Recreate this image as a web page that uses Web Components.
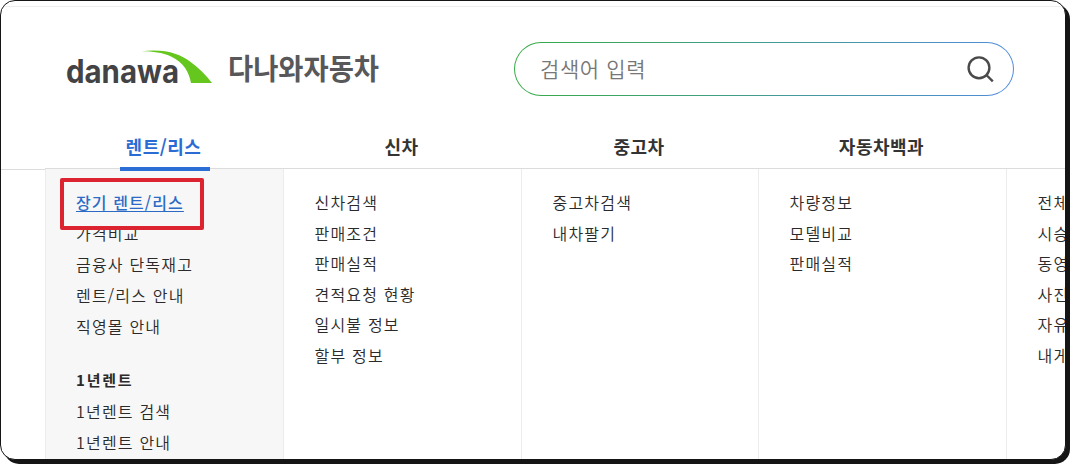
<!DOCTYPE html>
<html lang="ko">
<head>
<meta charset="utf-8">
<title>다나와자동차</title>
<style>
  body {
    margin: 0;
    width: 1070px;
    height: 464px;
    overflow: hidden;
    background: #fff;
    font-family: 'Noto Sans CJK KR', sans-serif;
    color: #333;
  }
</style>
</head>
<body>
<page-frame>
  <site-header></site-header>
  <main-nav>
    <nav-tab style="width: 238px" active>렌트/리스</nav-tab>
    <nav-tab style="width: 238px">신차</nav-tab>
    <nav-tab style="width: 237px">중고차</nav-tab>
    <nav-tab style="width: 248px">자동차백과</nav-tab>
  </main-nav>
  <mega-menu>
    <menu-column style="width: 238px" shaded>
      <menu-link active>장기 렌트/리스</menu-link>
      <menu-link>가격비교</menu-link>
      <menu-link>금융사 단독재고</menu-link>
      <menu-link>렌트/리스 안내</menu-link>
      <menu-link>직영몰 안내</menu-link>
      <menu-link heading>1년렌트</menu-link>
      <menu-link>1년렌트 검색</menu-link>
      <menu-link>1년렌트 안내</menu-link>
    </menu-column>
    <menu-column style="width: 238px">
      <menu-link>신차검색</menu-link>
      <menu-link>판매조건</menu-link>
      <menu-link>판매실적</menu-link>
      <menu-link>견적요청 현황</menu-link>
      <menu-link>일시불 정보</menu-link>
      <menu-link>할부 정보</menu-link>
    </menu-column>
    <menu-column style="width: 237px">
      <menu-link>중고차검색</menu-link>
      <menu-link>내차팔기</menu-link>
    </menu-column>
    <menu-column style="width: 248px">
      <menu-link>차량정보</menu-link>
      <menu-link>모델비교</menu-link>
      <menu-link>판매실적</menu-link>
    </menu-column>
    <menu-column style="width: 238px">
      <menu-link>전체</menu-link>
      <menu-link>시승</menu-link>
      <menu-link>동영</menu-link>
      <menu-link>사진</menu-link>
      <menu-link>자유</menu-link>
      <menu-link>내게</menu-link>
    </menu-column>
  </mega-menu>
</page-frame>

<script>
// every element here is just markup + styles in an open shadow root
function define(name, html) {
  const template = document.createElement('template');
  template.innerHTML = html;

  window.customElements.define(name, class extends HTMLElement {
    constructor() {
      super();
      this.attachShadow({ mode: 'open' });
      this.shadowRoot.appendChild(template.content.cloneNode(true));
    }
  });
}

define('page-frame', `
  <style>
    :host {
      display: block;
      box-sizing: border-box;
      width: 1066px;
      height: 460px;
      border: 1px solid #151515;
      border-radius: 15px;
      box-shadow: 4px 4px 0 #151515;
      background: #fff;
    }
    .clip {
      height: 100%;
      overflow: hidden;
      border-radius: 14px;
    }
    .top-line {
      height: 1px;
      margin-top: 5px;
      background: #eee;
    }
  </style>
  <div class="clip">
    <div class="top-line"></div>
    <slot></slot>
  </div>
`);

define('site-logo', `
  <style>
    :host { display: block; width: 330px; height: 50px; }
    svg { display: block; overflow: visible; }
    .latin { font: 700 32px Inter, sans-serif; fill: #434345; }
    .korean { font: 700 29px 'Noto Sans CJK KR', sans-serif; fill: #58585a; }
  </style>
  <svg width="330" height="50" viewBox="66 44 330 50">
    <path d="M141.5 51.3C165 48.5 180 54 190 61.5C199 68 206 75 212 83L191 83C189 72 184 63 171 56.5C162 52.5 152 51.2 141.5 51.3Z" fill="#65c71d"/>
    <text class="latin" x="66" y="83.2" textLength="113" lengthAdjust="spacingAndGlyphs">danawa</text>
    <text class="korean" x="228" y="80" textLength="151" lengthAdjust="spacingAndGlyphs">다나와자동차</text>
  </svg>
`);

define('search-box', `
  <style>
    :host {
      display: flex;
      align-items: center;
      justify-content: space-between;
      box-sizing: border-box;
      width: 500px;
      height: 54px;
      padding: 0 18px 0 25px;
      border: 1px solid transparent;
      border-radius: 27px;
      background:
        linear-gradient(#fff, #fff) padding-box,
        linear-gradient(90deg, #36ab45, #4f8cdc) border-box;
    }
    span {
      margin-top: -2px;
      font-size: 21px;
      font-weight: 350;
      letter-spacing: 0.6px;
      color: #777;
    }
    svg { display: block; }
  </style>
  <span>검색어 입력</span>
  <svg width="28" height="28" viewBox="0 0 28 28" fill="none" stroke="#4a4a4a" stroke-width="2.4">
    <circle cx="12" cy="12.8" r="10.4"/>
    <path d="M19.4 20L25.8 26.4"/>
  </svg>
`);

define('site-header', `
  <style>
    :host {
      display: flex;
      align-items: center;
      justify-content: space-between;
      height: 50px;
      padding: 37px 51px 37px 65px;
    }
  </style>
  <site-logo></site-logo>
  <search-box></search-box>
`);

define('main-nav', `
  <style>
    :host {
      display: flex;
      height: 36px;
      padding-left: 45px;
      margin-top: 1px;
    }
  </style>
  <slot></slot>
`);

define('nav-tab', `
  <style>
    :host {
      display: flex;
      justify-content: center;
      font-size: 18px;
      font-weight: 700;
      line-height: 26px;
      letter-spacing: 0.5px;
      white-space: nowrap;
      color: #333;
    }
    span {
      box-sizing: border-box;
      height: 39px;
      padding: 1px 9px 0 6px;
      position: relative;
      z-index: 1;
    }
    :host([active]) { color: #2b6bd3; }
    :host([active]) span { border-bottom: 4px solid #2b6fd6; }
  </style>
  <span><slot></slot></span>
`);

define('mega-menu', `
  <style>
    :host {
      display: flex;
      width: 1300px;
      height: 300px;
    }
    .gutter {
      box-sizing: border-box;
      width: 44px;
      margin-top: 1px;
      border-top: 1px solid #dcdcdc;
    }
    .columns {
      display: flex;
      border-top: 1px solid #dcdcdc;
    }
    /* red marker around the first link */
    .marker {
      position: absolute;
      box-sizing: border-box;
      left: 60px;
      top: 178px;
      width: 144px;
      height: 52px;
      border: 4px solid #dc2430;
      border-radius: 2px;
    }
  </style>
  <div class="gutter"></div>
  <div class="columns"><slot></slot></div>
  <div class="marker"></div>
`);

define('menu-column', `
  <style>
    :host {
      --row: 30.6px;
      display: flex;
      flex-direction: column;
      box-sizing: border-box;
      padding: 18px 0 0 30.5px;
      border-left: 1px solid #ececec;
    }
    :host([shaded]) {
      --row: 31px;
      padding-left: 30px;
      background: #f7f7f7;
    }
  </style>
  <slot></slot>
`);

define('menu-link', `
  <style>
    :host {
      display: block;
      height: var(--row);
      font-size: 16px;
      font-weight: 350;
      line-height: 31px;
      letter-spacing: 1.2px;
      white-space: nowrap;
      color: #2a2a2a;
    }
    :host([active]) {
      font-weight: 500;
      letter-spacing: 1.1px;
      color: #2b6bc6;
      text-decoration: underline;
      text-underline-offset: 2px;
    }
    :host([heading]) {
      margin: 22px 0 1px;
      font-weight: 700;
      font-size: 15px;
      letter-spacing: 1.8px;
    }
  </style>
  <slot></slot>
`);
</script>
</body>
</html>
